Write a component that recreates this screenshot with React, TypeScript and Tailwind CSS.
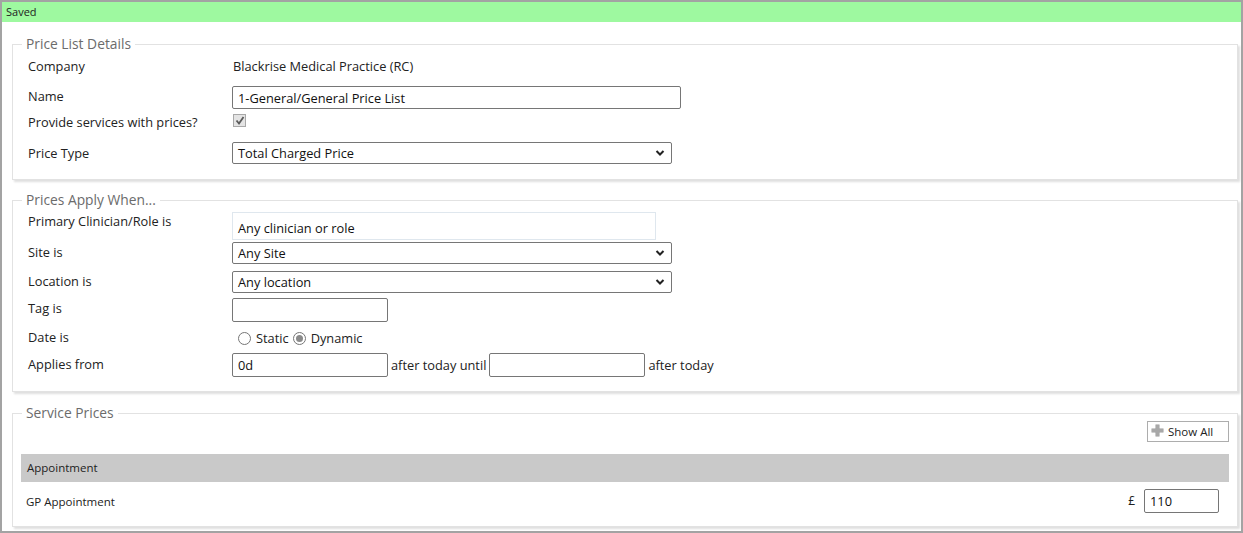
import React from "react";

const font = { fontFamily: '"Open Sans", "Noto Sans", sans-serif' };

function Chevron() {
  return (
    <svg
      width="10"
      height="7"
      viewBox="0 0 10 7"
      className="pointer-events-none absolute right-[7px] top-1/2 -translate-y-1/2"
    >
      <polyline points="1.5,1.5 5,5 8.5,1.5" fill="none" stroke="#222" strokeWidth="2" />
    </svg>
  );
}

function Select({ value, width }: { value: string; width: string }) {
  return (
    <div className={`relative h-[22px] ${width}`}>
      <div className="h-full w-full rounded-[2px] border border-[#767676] bg-white pl-[5px] text-[12.8px] leading-[20px] text-[#111]">
        {value}
      </div>
      <Chevron />
    </div>
  );
}

function TextBox({ value = "", width, height = "h-[24px]" }: { value?: string; width: string; height?: string }) {
  return (
    <div
      className={`${width} ${height} rounded-[2px] border border-[#767676] bg-white pl-[5px] text-[12.8px] leading-[22px] text-[#111]`}
    >
      {value}
    </div>
  );
}

function Radio({ checked }: { checked?: boolean }) {
  return (
    <span className="inline-flex h-[13px] w-[13px] items-center justify-center rounded-full border border-[#767676] bg-white">
      {checked && <span className="h-[7px] w-[7px] rounded-full bg-[#8a8a8a]" />}
    </span>
  );
}

function Fieldset({
  legend,
  className = "",
  legendOffset,
  children,
}: {
  legend: string;
  className?: string;
  legendOffset: string;
  children: React.ReactNode;
}) {
  return (
    <fieldset
      className={`ml-[10px] mr-[3px] border border-[#e2e2e2] bg-white shadow-[2px_2px_2px_rgba(0,0,0,0.13)] ${className}`}
    >
      <legend className={`${legendOffset} px-[4px] text-[13.8px] leading-[18px] text-[#6b6b6b]`}>{legend}</legend>
      {children}
    </fieldset>
  );
}

const label = "w-[204px] shrink-0 text-[12.8px] leading-[18px] text-[#222]";

export default function App() {
  return (
    <div style={font} className="box-border h-[533px] w-[1243px] overflow-hidden border-2 border-[#a3a3a3] bg-white">
      <div className="h-[20px] bg-[#9ef9a0] pl-[4px] text-[11px] leading-[20px] text-[#222]">Saved</div>

      <Fieldset legend="Price List Details" legendOffset="-ml-[6px]" className="mt-[13px] pb-[14px] pl-[15px]">
        <div className="mt-[1px] flex h-[24px] items-center">
          <div className={label}>Company</div>
          <div className="pl-[1px] text-[12.8px] leading-[18px] text-[#222]">Blackrise Medical Practice (RC)</div>
        </div>
        <div className="mt-[7px] flex h-[24px] items-center">
          <div className={`${label} -mt-[2px]`}>Name</div>
          <TextBox value="1-General/General Price List" width="w-[449px]" height="h-[23px]" />
        </div>
        <div className="flex h-[24px] items-center">
          <div className={`${label} pt-[2px]`}>Provide services with prices?</div>
          <span className="ml-[1px] -mt-[2px] inline-flex h-[13px] w-[13px] items-center justify-center border border-[#a8a8a8] bg-[#e4e4e4]">
            <svg width="10" height="9" viewBox="0 0 10 9">
              <polyline points="1.5,4.5 4,7.5 8.5,1" fill="none" stroke="#5a5a5a" strokeWidth="1.8" />
            </svg>
          </span>
        </div>
        <div className="mt-[8px] flex h-[24px] items-center">
          <div className={`${label} -mt-[1px]`}>Price Type</div>
          <Select value="Total Charged Price" width="w-[440px]" />
        </div>
      </Fieldset>

      <Fieldset legend="Prices Apply When..." legendOffset="-ml-[6px]" className="mt-[11px] pb-[14px] pl-[15px]">
        <div className="mt-[3px] flex items-start">
          <div className={label}>Primary Clinician/Role is</div>
          <div className="h-[28px] w-[424px] border border-[#dfe7ee] bg-white pl-[5px] pt-[6px] text-[12.8px] leading-[18px] text-[#111]">
            Any clinician or role
          </div>
        </div>
        <div className="mt-[2px] flex h-[22px] items-center">
          <div className={`${label} -mt-[2px]`}>Site is</div>
          <Select value="Any Site" width="w-[440px]" />
        </div>
        <div className="mt-[7px] flex h-[22px] items-center">
          <div className={`${label} -mt-[2px]`}>Location is</div>
          <Select value="Any location" width="w-[440px]" />
        </div>
        <div className="mt-[5px] flex h-[24px] items-center">
          <div className={`${label} -mt-[4px]`}>Tag is</div>
          <TextBox width="w-[156px]" />
        </div>
        <div className="mt-[5px] flex h-[22px] items-center">
          <div className={`${label} -mt-[3px]`}>Date is</div>
          <div className="flex items-center pl-[6px] text-[12.8px] leading-[18px] text-[#222]">
            <Radio />
            <span className="ml-[5px] mr-[4px]">Static</span>
            <Radio checked />
            <span className="ml-[5px]">Dynamic</span>
          </div>
        </div>
        <div className="mt-[4px] flex h-[24px] items-center">
          <div className={`${label} -mt-[2px]`}>Applies from</div>
          <TextBox value="0d" width="w-[156px]" />
          <span className="mx-[3px] text-[12.8px] leading-[18px] text-[#222]">after today until</span>
          <TextBox width="w-[156px]" />
          <span className="ml-[3px] text-[12.8px] leading-[18px] text-[#222]">after today</span>
        </div>
      </Fieldset>

      <Fieldset legend="Service Prices" legendOffset="ml-[1px]" className="mt-[12px] px-[8px] pb-[13px]">
        <div className="-mt-[1px] flex justify-end">
          <button className="flex h-[21px] w-[82px] items-center border border-[#adadad] bg-white pl-[3px] text-[11.5px] leading-[16px] text-[#222]">
            <svg width="13" height="13" viewBox="0 0 13 13" className="mr-[4px] -mt-[2px]">
              <path d="M4.5 0.5h4v4h4v4h-4v4h-4v-4h-4v-4h4z" fill="#9a9a9a" />
              <path d="M5 1h3v4h4v3h-4v4h-3v-4h-4v-3h4z" fill="#a8a8a8" />
            </svg>
            Show All
          </button>
        </div>
        <div className="mt-[12px] h-[28px] bg-[#c9c9c9] pl-[6px] text-[11.5px] leading-[28px] text-[#222]">Appointment</div>
        <div className="mt-[7px] flex h-[24px] items-center pl-[5px] pr-[10px]">
          <span className="flex-1 pt-[2px] text-[11.5px] leading-[16px] text-[#222]">GP Appointment</span>
          <span className="mr-[9px] text-[12px] text-[#222]">£</span>
          <TextBox value="110" width="w-[75px]" />
        </div>
      </Fieldset>
    </div>
  );
}
